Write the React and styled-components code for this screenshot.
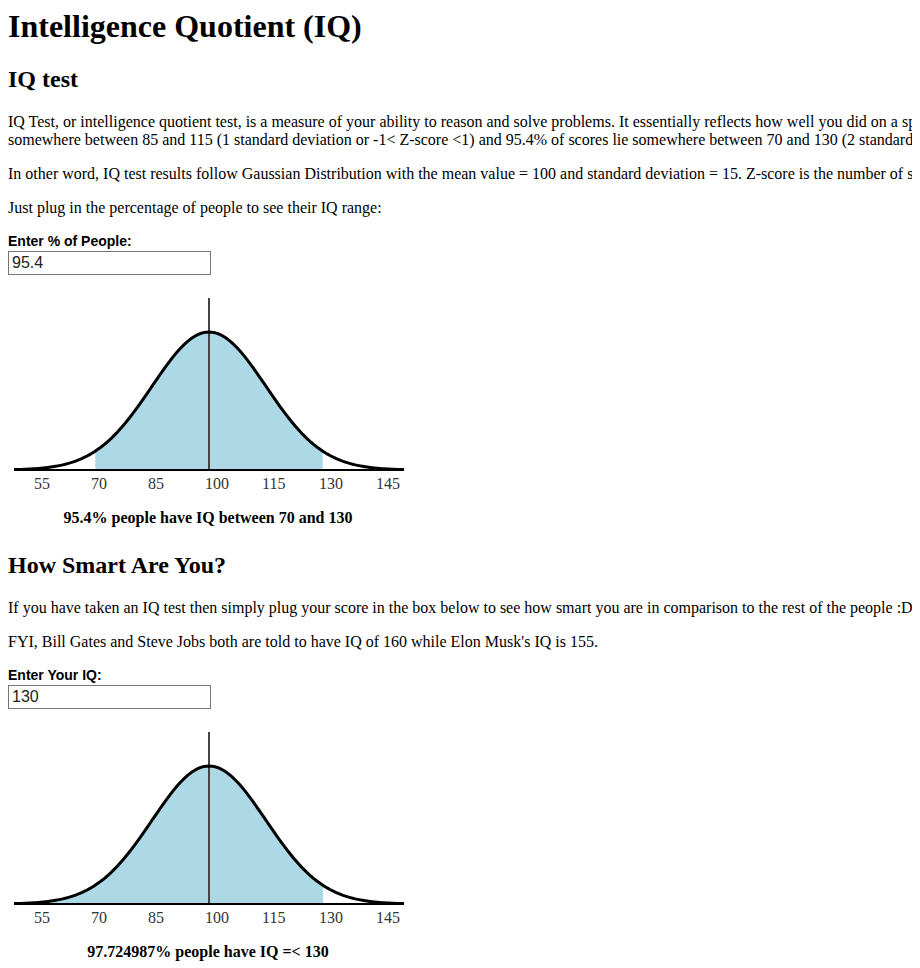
import React, { useState } from "react";
import styled, { createGlobalStyle } from "styled-components";

const GlobalStyle = createGlobalStyle`
  html, body {
    overflow: hidden;
  }
  body {
    margin: 8px;
    font-family: "Liberation Serif", "Times New Roman", serif;
    font-size: 16px;
    color: #000;
    background: #fff;
  }
`;

// gaussian helpers
const erf = (x) => {
  let sum = 0;
  let term = x;
  for (let n = 0; n < 60; n++) {
    sum += term / (2 * n + 1);
    term *= (-x * x) / (n + 1);
  }
  return (2 / Math.sqrt(Math.PI)) * sum;
};
const cdf = (z) => 0.5 * (1 + erf(z / Math.SQRT2));

const zForPercent = (pct) => {
  const target = Math.min(Math.max(pct, 0), 99.9999) / 100;
  let lo = 0;
  let hi = 8;
  for (let i = 0; i < 80; i++) {
    const mid = (lo + hi) / 2;
    if (erf(mid / Math.SQRT2) < target) lo = mid;
    else hi = mid;
  }
  return (lo + hi) / 2;
};

const W = 400;
const H = 205;
const CX = 201;
const SX = 3.8;
const BASE = 182;
const PEAK = 138;
const MIN_IQ = 100 - (CX - 6) / SX;
const MAX_IQ = 100 + (396 - CX) / SX;
const TICKS = [55, 70, 85, 100, 115, 130, 145];

const px = (iq) => CX + (iq - 100) * SX;
const py = (iq) => BASE - PEAK * Math.exp(-0.5 * ((iq - 100) / 15) ** 2);

const curvePoints = (a, b) => {
  const pts = [];
  const steps = 160;
  for (let i = 0; i <= steps; i++) {
    const iq = a + ((b - a) * i) / steps;
    pts.push(`${px(iq).toFixed(2)},${py(iq).toFixed(2)}`);
  }
  return pts;
};

const BellChart = ({ from, to }) => {
  const a = Math.max(from, MIN_IQ);
  const b = Math.min(to, MAX_IQ);
  const fill =
    b > a
      ? `M${px(a)},${BASE} L${curvePoints(a, b).join(" L")} L${px(b)},${BASE} Z`
      : "";
  const curve = `M${curvePoints(MIN_IQ, MAX_IQ).join(" L")}`;

  return (
    <ChartSvg width={W} height={H} viewBox={`0 0 ${W} ${H}`}>
      {fill && <path d={fill} fill="#add8e6" />}
      <line x1={CX} y1={10} x2={CX} y2={BASE} stroke="#444" strokeWidth="2" />
      <line x1={6} y1={BASE} x2={396} y2={BASE} stroke="#000" strokeWidth="2" />
      <path d={curve} fill="none" stroke="#000" strokeWidth="3" />
      {TICKS.map((t) => (
        <TickText key={t} x={px(t) - 4} y={201}>
          {t}
        </TickText>
      ))}
    </ChartSvg>
  );
};

const App = () => {
  const [percent, setPercent] = useState("95.4");
  const [iq, setIq] = useState("130");

  const pct = parseFloat(percent) || 0;
  const z = zForPercent(pct);
  const low = 100 - 15 * z;
  const high = 100 + 15 * z;

  const score = parseFloat(iq) || 0;
  const below = (cdf((score - 100) / 15) * 100).toFixed(6);

  return (
    <Page>
      <GlobalStyle />
      <Title>Intelligence Quotient (IQ)</Title>
      <Heading>IQ test</Heading>
      <Text>
        IQ Test, or intelligence quotient test, is a measure of your ability to reason and
        solve problems. It essentially reflects how well you did on a specific test as
        compared to other people of your age group. 68% of scores lie
        <br />
        somewhere between 85 and 115 (1 standard deviation or -1&lt; Z-score &lt;1) and
        95.4% of scores lie somewhere between 70 and 130 (2 standard deviations or -2&lt;
        Z-score &lt;2).
      </Text>
      <Text>
        In other word, IQ test results follow Gaussian Distribution with the mean value =
        100 and standard deviation = 15. Z-score is the number of standard deviations a
        score is away from the mean.
      </Text>
      <Text>Just plug in the percentage of people to see their IQ range:</Text>

      <Label htmlFor="pct">Enter % of People:</Label>
      <NumberInput
        id="pct"
        value={percent}
        onChange={(e) => setPercent(e.target.value)}
      />
      <BellChart from={low} to={high} />
      <Caption>
        {pct}% people have IQ between {Math.round(low)} and {Math.round(high)}
      </Caption>

      <Heading>How Smart Are You?</Heading>
      <Text>
        If you have taken an IQ test then simply plug your score in the box below to see
        how smart you are in comparison to the rest of the people :D.
      </Text>
      <Text>
        FYI, Bill Gates and Steve Jobs both are told to have IQ of 160 while Elon Musk's IQ
        is 155.
      </Text>

      <Label htmlFor="iq">Enter Your IQ:</Label>
      <NumberInput id="iq" value={iq} onChange={(e) => setIq(e.target.value)} />
      <BellChart from={-1000} to={score} />
      <Caption>
        {below}% people have IQ =&lt; {score}
      </Caption>
    </Page>
  );
};

export default App;

const Page = styled.div`
  width: 1600px;
`;

const Title = styled.h1`
  font-size: 32px;
  font-weight: bold;
  margin: 0 0 21px;
`;

const Heading = styled.h2`
  font-size: 24px;
  font-weight: bold;
  margin: 20px 0;
`;

const Text = styled.p`
  margin: 16px 0;
  line-height: 18px;
`;

const Label = styled.label`
  display: block;
  font-family: "Liberation Sans", Arial, sans-serif;
  font-size: 14px;
  font-weight: bold;
  line-height: 16px;
  margin-top: 16px;
`;

const NumberInput = styled.input`
  display: block;
  box-sizing: border-box;
  width: 203px;
  height: 24px;
  margin-top: 2px;
  padding: 1px 3px;
  border: 1px solid #767676;
  font-family: "Liberation Sans", Arial, sans-serif;
  font-size: 16px;
  color: #222;
  outline: none;
`;

const ChartSvg = styled.svg`
  display: block;
  margin-top: 13px;
`;

const TickText = styled.text`
  font-family: "Liberation Serif", "Times New Roman", serif;
  font-size: 16px;
  fill: #333;
`;

const Caption = styled.p`
  width: 400px;
  margin: 16px 0 25px;
  line-height: 18px;
  text-align: center;
  font-weight: bold;
`;
